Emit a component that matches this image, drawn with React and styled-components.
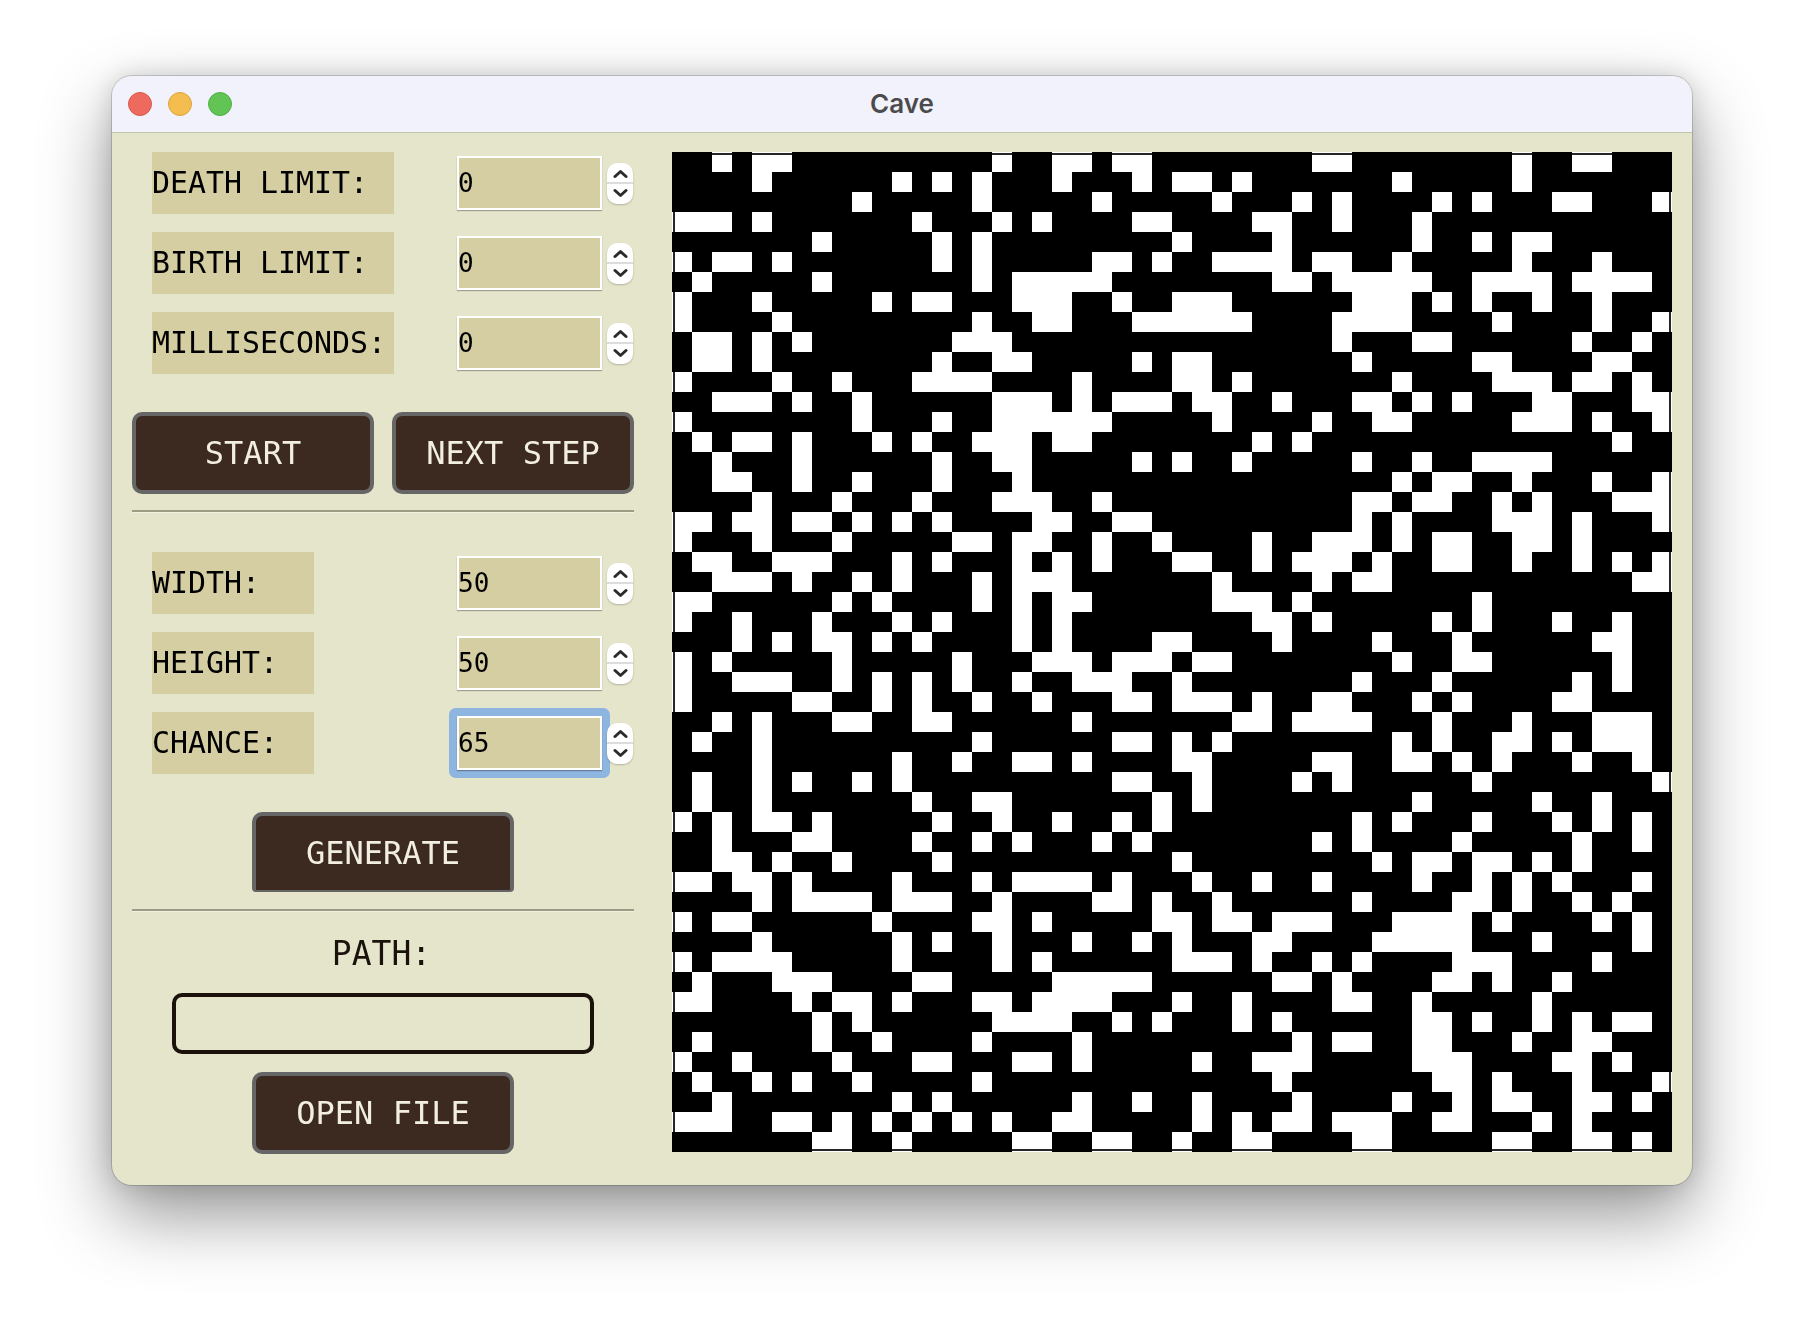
import styled, { createGlobalStyle } from "styled-components";

const GlobalStyle = createGlobalStyle`
  html, body {
    margin: 0;
    padding: 0;
    background: #ffffff;
  }
`;

const MONO = `"DejaVu Sans Mono", "Liberation Mono", monospace`;

// white cells of the 50x50 cave, column numbers per row
const WHITE_CELLS = [
  [2,4,5,16,19,20,22,23,32,33,42,45,46],
  [4,11,13,15,19,23,25,26,28,36,42],
  [9,15,21,27,31,33,38,40,44,45,49],
  [0,1,2,4,12,16,18,23,24,29,30,33,37],
  [7,13,15,25,30,37,40,42,43],
  [0,2,3,5,13,15,21,22,24,27,28,29,30,32,33,36,42,46],
  [1,7,15,17,18,19,20,21,30,31,33,34,35,36,37,40,41,42,43,45,46,47,48],
  [0,4,10,12,13,17,18,19,22,25,26,27,34,35,36,38,40,43,46],
  [0,5,15,18,19,23,24,25,26,27,28,33,34,35,36,41,46,49],
  [1,2,4,6,14,15,16,33,37,38,45,48],
  [1,2,4,13,16,17,23,25,26,34,40,41,46,47],
  [0,5,8,12,13,14,15,20,25,26,28,36,41,42,43,45,46,48],
  [2,3,4,6,9,16,17,18,20,22,23,24,26,27,30,34,35,37,39,43,44,48,49],
  [0,9,13,16,17,18,19,20,21,27,32,35,36,42,43,44,46,49],
  [1,3,4,6,10,12,15,16,17,19,20,29,31,47],
  [2,6,13,16,17,23,25,28,34,37,40,41,42,43],
  [2,3,6,9,13,17,36,38,39,42,46,49],
  [4,8,12,16,17,18,21,34,35,37,38,41,43,47,48,49],
  [0,1,3,4,6,7,9,11,13,18,19,22,23,34,36,41,42,43,45,49],
  [0,4,8,14,15,17,18,21,24,29,32,33,34,36,38,39,42,43,45],
  [1,2,5,6,7,11,13,17,19,21,25,26,29,31,32,33,35,38,39,42,45,47,49],
  [2,3,4,6,9,11,15,17,18,19,27,32,34,35,48,49],
  [0,1,8,10,15,17,19,20,27,28,29,31,40],
  [0,3,7,11,13,17,19,29,30,32,38,40,44,47],
  [3,5,7,8,10,12,17,19,24,25,30,35,39,46,47],
  [0,2,8,14,18,19,20,22,23,24,26,27,36,39,40,47],
  [0,3,4,5,8,10,12,14,17,20,21,22,25,34,38,45,47],
  [0,6,7,10,12,15,18,22,23,25,26,27,29,32,33,37,39,44,45],
  [2,4,8,9,12,13,20,28,29,31,32,33,34,38,42,46,47,48],
  [1,4,15,22,23,25,27,36,38,41,42,44,46,47,48],
  [4,11,14,17,18,20,25,26,32,33,36,37,39,41,45,48],
  [1,4,6,9,11,22,23,26,31,33,40,49],
  [1,4,12,15,16,24,26,37,43,46],
  [0,2,4,5,7,13,16,19,22,24,34,36,40,44,46,48],
  [2,6,7,12,15,17,21,23,32,34,39,45,48],
  [2,3,5,8,13,25,35,37,38,40,41,43,45],
  [0,1,3,4,6,11,15,17,18,19,20,22,26,29,32,37,40,42,44,48],
  [4,6,7,8,9,11,12,13,16,21,22,24,27,34,39,40,42,45,47],
  [0,2,3,10,15,16,18,24,25,27,28,30,31,32,36,37,38,39,41,46,48],
  [4,11,13,16,20,23,25,29,30,35,36,37,38,39,43,48],
  [0,2,3,4,5,11,16,18,25,26,27,29,32,34,39,40,41,46],
  [1,5,6,7,12,13,19,20,21,22,23,30,31,33,38,39,41,44],
  [0,1,6,8,9,11,15,16,18,19,20,21,25,28,33,34,37,43],
  [7,9,16,17,18,19,22,24,28,30,37,38,40,43,45,47,48],
  [1,7,10,15,20,31,33,34,37,38,42,45,46],
  [0,3,8,12,13,17,18,20,26,29,30,31,37,38,39,44,45,47],
  [1,4,6,9,15,30,38,39,41,45,49],
  [2,11,13,20,23,26,31,36,39,41,42,45,46,48],
  [0,1,2,5,6,8,10,12,14,16,19,20,26,28,30,31,33,34,35,38,39,43,45],
  [7,8,11,17,18,21,22,25,28,29,34,35,41,42,45,46,48],
];

const Page = styled.div`
  width: 1804px;
  height: 1334px;
  padding: 76px 0 0 112px;
  box-sizing: border-box;
  overflow: hidden;
`;

const Window = styled.div`
  width: 1580px;
  height: 1109px;
  border-radius: 20px;
  overflow: hidden;
  background: #e5e5cb;
  box-shadow: 0 0 0 1px rgba(0, 0, 0, 0.16), 0 30px 70px rgba(0, 0, 0, 0.42), 0 0 24px rgba(0, 0, 0, 0.14);
`;

const TitleBar = styled.div`
  position: relative;
  height: 56px;
  display: flex;
  align-items: center;
  justify-content: center;
  background: #f1f2fb;
  border-bottom: 1px solid #c2c3ab;
`;

const Lights = styled.div`
  position: absolute;
  left: 16px;
  top: 16px;
  display: flex;
  gap: 16px;
`;

const Light = styled.span`
  width: 24px;
  height: 24px;
  box-sizing: border-box;
  border-radius: 50%;
  background: ${(p) => p.$color};
  border: 1px solid ${(p) => p.$edge};
`;

const Title = styled.div`
  margin-top: -2px;
  font-family: Inter, "Liberation Sans", sans-serif;
  font-size: 26px;
  font-weight: 600;
  color: #4b4b4d;
`;

const Body = styled.div`
  display: flex;
  gap: 38px;
  padding: 19px 20px 0;
`;

const SidePanel = styled.div`
  width: 502px;
  display: flex;
  flex-direction: column;
  flex-shrink: 0;
`;

const FormGroup = styled.div`
  display: flex;
  flex-direction: column;
  gap: 18px;
  margin-top: ${(p) => p.$top || 0}px;
`;

const FormRow = styled.div`
  display: flex;
  align-items: center;
  justify-content: space-between;
  padding: 0 1px 0 20px;
  height: 62px;
`;

const FieldLabel = styled.div`
  width: ${(p) => p.$width}px;
  height: 62px;
  box-sizing: border-box;
  padding-bottom: 2px;
  display: flex;
  align-items: center;
  background: #d5cea3;
  font-family: ${MONO};
  font-size: 29.9px;
  white-space: pre;
  color: #000000;
`;

const Field = styled.div`
  display: flex;
  align-items: center;
  gap: 5px;
`;

const InputRing = styled.div`
  border-radius: 2px;
  box-shadow: ${(p) => (p.$focused ? "0 0 0 8px #8db5df" : "none")};
`;

const NumberBox = styled.input`
  display: block;
  width: 145px;
  height: 54px;
  box-sizing: border-box;
  padding: 0;
  text-indent: -1px;
  border: 2.5px solid #ffffff;
  border-radius: 0;
  outline: none;
  background: #d5cea3;
  box-shadow: 0 1px 1px rgba(0, 0, 0, 0.3);
  font-family: ${MONO};
  font-size: 26px;
  color: #000000;
`;

const Spinner = styled.div`
  position: relative;
  width: 26px;
  height: 41px;
  display: flex;
  flex-direction: column;
  align-items: center;
  justify-content: space-between;
  box-sizing: border-box;
  padding: 6px 0;
  background: #ffffff;
  border-radius: 10px;
  box-shadow: 0 1px 2px rgba(0, 0, 0, 0.22);

  &::after {
    content: "";
    position: absolute;
    left: 0;
    right: 0;
    top: 19px;
    height: 2px;
    background: #dcdcdc;
  }
`;

const ButtonRow = styled.div`
  display: flex;
  justify-content: ${(p) => (p.$center ? "center" : "space-between")};
  margin-top: ${(p) => p.$top || 0}px;
`;

const ActionButton = styled.button`
  width: ${(p) => p.$width}px;
  height: ${(p) => (p.$clipped ? 80 : 82)}px;
  box-sizing: border-box;
  padding: 0;
  border: 4px solid #666666;
  border-bottom-width: ${(p) => (p.$clipped ? 2 : 4)}px;
  border-radius: ${(p) => (p.$clipped ? "10px 10px 4px 4px" : "10px")};
  background: #3c2a21;
  font-family: ${MONO};
  font-size: 32px;
  white-space: pre;
  color: #f2efe2;
`;

const Divider = styled.div`
  height: 2px;
  margin-top: ${(p) => p.$top}px;
  background: #9c9c84;
  border-bottom: 1px solid #f1f1e0;
`;

const PathLabel = styled.div`
  margin-top: 22px;
  height: 40px;
  line-height: 40px;
  text-align: center;
  padding-right: 3px;
  font-family: ${MONO};
  font-size: 33px;
  color: #1a120b;
`;

const PathInput = styled.input`
  display: block;
  width: 422px;
  height: 61px;
  box-sizing: border-box;
  margin: 19px auto 0;
  border: 4px solid #1a120b;
  border-radius: 10px;
  outline: none;
  background: #e5e5cb;
`;

const CaveFrame = styled.div`
  width: 1000px;
  height: 1000px;
  flex-shrink: 0;
  background: #000000;
`;

const Cave = () => (
  <svg width="1000" height="1000" viewBox="0 0 1000 1000" shapeRendering="crispEdges" style={{ display: "block" }}>
    {WHITE_CELLS.map((cols, row) =>
      cols.map((col) => <rect key={`${row}-${col}`} x={col * 20} y={row * 20} width="20" height="20" fill="#ffffff" />)
    )}
    {/* the canvas border only shows where a white cell touches the edge */}
    <rect x="2" y="2" width="996" height="996" fill="none" stroke="#262626" strokeWidth="2" style={{ mixBlendMode: "multiply" }} />
  </svg>
);

const Chevron = ({ up }) => (
  <svg width="15" height="10" viewBox="0 0 15 10" style={{ display: "block" }}>
    <path
      d={up ? "M2 7.5 L7.5 2.5 L13 7.5" : "M2 2.5 L7.5 7.5 L13 2.5"}
      fill="none"
      stroke="#2b2b2b"
      strokeWidth="3"
      strokeLinecap="round"
      strokeLinejoin="round"
    />
  </svg>
);

const NumberField = ({ value, focused }) => (
  <Field>
    <InputRing $focused={focused}>
      <NumberBox value={value} readOnly />
    </InputRing>
    <Spinner>
      <Chevron up />
      <Chevron />
    </Spinner>
  </Field>
);

const simulationFields = [
  { label: "DEATH LIMIT:", value: "0" },
  { label: "BIRTH LIMIT:", value: "0" },
  { label: "MILLISECONDS:", value: "0" },
];

const sizeFields = [
  { label: "WIDTH:", value: "50" },
  { label: "HEIGHT:", value: "50" },
  { label: "CHANCE:", value: "65", focused: true },
];

export default function App() {
  return (
    <Page>
      <GlobalStyle />
      <Window>
        <TitleBar>
          <Lights>
            <Light $color="#ee6a5f" $edge="#d8574c" />
            <Light $color="#f5bd4f" $edge="#dba43c" />
            <Light $color="#61c454" $edge="#52ad46" />
          </Lights>
          <Title>Cave</Title>
        </TitleBar>
        <Body>
          <SidePanel>
            <FormGroup>
              {simulationFields.map((f) => (
                <FormRow key={f.label}>
                  <FieldLabel $width={242}>{f.label}</FieldLabel>
                  <NumberField value={f.value} />
                </FormRow>
              ))}
            </FormGroup>
            <ButtonRow $top={38}>
              <ActionButton $width={242}>START</ActionButton>
              <ActionButton $width={242}>NEXT STEP</ActionButton>
            </ButtonRow>
            <Divider $top={16} />
            <FormGroup $top={39}>
              {sizeFields.map((f) => (
                <FormRow key={f.label}>
                  <FieldLabel $width={162}>{f.label}</FieldLabel>
                  <NumberField value={f.value} focused={f.focused} />
                </FormRow>
              ))}
            </FormGroup>
            <ButtonRow $center $top={38}>
              <ActionButton $width={262} $clipped>GENERATE</ActionButton>
            </ButtonRow>
            <Divider $top={17} />
            <PathLabel>PATH:</PathLabel>
            <PathInput readOnly />
            <ButtonRow $center $top={18}>
              <ActionButton $width={262}>OPEN FILE</ActionButton>
            </ButtonRow>
          </SidePanel>
          <CaveFrame>
            <Cave />
          </CaveFrame>
        </Body>
      </Window>
    </Page>
  );
}
